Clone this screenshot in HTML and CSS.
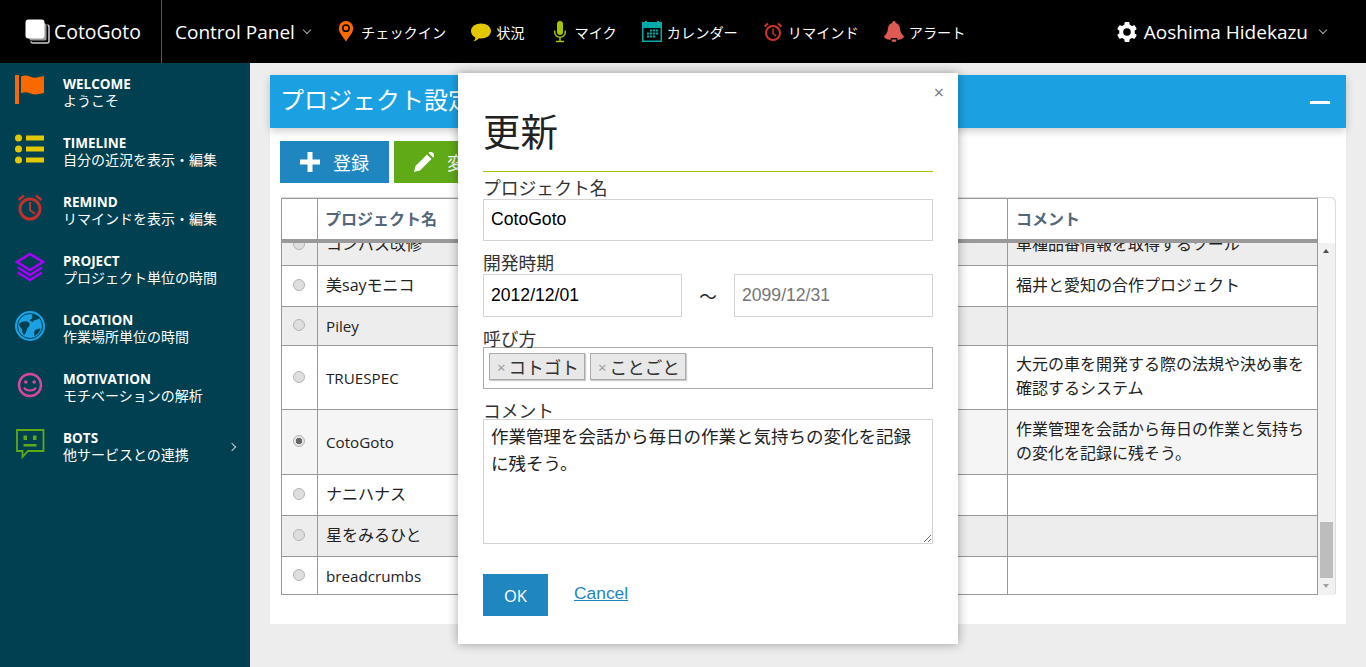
FILE: index.html
```html
<!DOCTYPE html>
<html lang="ja">
<head>
    <meta charset="UTF-8">
    <meta name="viewport" content="width=device-width, initial-scale=1.0">
    <title>CotoGoto</title>
    <link rel="stylesheet" href="styles.css">
</head>
<body>

    <header class="topbar">
        <div class="brand">
            <svg class="brand-icon" viewBox="0 0 25 25"><rect x="6" y="6" width="18" height="18" rx="2" fill="none" stroke="#ccc" stroke-width="1.5"/><rect x="4" y="4" width="18" height="18" rx="2" fill="#999" stroke="#000"/><rect x="0.5" y="0.5" width="19" height="19" rx="3" fill="#fff"/></svg>
            <span>CotoGoto</span>
        </div>
        <div class="menu-title">Control Panel <span class="chevron"></span></div>
        <nav class="topnav">
            <a class="nav-item">
                <svg viewBox="0 0 20 22"><path fill="#fa6800" fill-rule="evenodd" d="M10 0a7.2 7.2 0 0 0-7.2 7.2C2.800 12 7.500 16 10 20.500 12.500 16 17.200 12 17.200 7.200A7.200 7.200 0 0 0 10 0zm0 3.300a3.900 3.900 0 1 1 0 7.800 3.900 3.900 0 0 1 0-7.800zm0 1.500a2.400 2.400 0 1 0 0 4.800 2.400 2.400 0 0 0 0-4.800z"/></svg>
                チェックイン
            </a>
            <a class="nav-item">
                <svg viewBox="0 0 20 22"><path fill="#e3c800" d="M10 2.500c5.500 0 10 3 10 7.500s-4.500 7.500-10 7.500c-.8 0-1.500 0-2.200-.2C6.500 19 4.500 20 2.500 20.300c1-1 1.700-2.300 1.800-3.900C1.700 15 0 12.700 0 10c0-4.500 4.500-7.500 10-7.500z"/></svg>
                状況
            </a>
            <a class="nav-item">
                <svg viewBox="0 0 20 22"><rect x="7" y="0" width="6" height="14" rx="3" fill="#a4c400"/><path fill="none" stroke="#a4c400" stroke-width="1.500" d="M4.700 9.500v1.500a5.300 5.300 0 0 0 10.600 0V9.500M10 16.500V20M6 20.500h8"/></svg>
                マイク
            </a>
            <a class="nav-item">
                <svg viewBox="0 0 20 22"><path fill="#00aba9" fill-rule="evenodd" d="M0 1h3V0h2v1h10V0h2v1h3v20H0zM1.500 7v12.500h17V7z"/><path fill="#00aba9" d="M8 8.500h2.200v2H8zM11 8.500h2.200v2H11zM14 8.500h2.200v2H14zM5 11.500h2.200v2H5zM8 11.500h2.200v2H8zM11 11.500h2.200v2H11zM14 11.500h2.200v2H14zM5 14.500h2.200v2H5zM8 14.500h2.200v2H8zM11 14.500h2.200v2H11z"/></svg>
                カレンダー
            </a>
            <a class="nav-item">
                <svg viewBox="0 0 20 22"><circle cx="10" cy="12" r="7" fill="none" stroke="#ce352c" stroke-width="2"/><path fill="none" stroke="#ce352c" stroke-width="1.500" d="M10 7.500V12.500L13 15"/><path fill="none" stroke="#ce352c" stroke-width="2" d="M1.500 5.500 5 2.500M18.500 5.500 15 2.500"/></svg>
                リマインド
            </a>
            <a class="nav-item">
                <svg viewBox="0 0 20 22"><path fill="#e05a55" d="M10 0a1.500 1.500 0 0 1 1.500 1.700c3 .8 4.300 3.300 4.600 6.300.3 3.200 1.500 5.200 3.900 7.200 0 2-3.500 3.300-6.500 3.700l-.2-1.800H6.700l-.2 1.800C3.500 18.500 0 17.200 0 15.200c2.400-2 3.600-4 3.900-7.200.3-3 1.600-5.500 4.600-6.300A1.500 1.500 0 0 1 10 0z"/><path fill="#e05a55" d="M7.500 18.500h5a2.500 2.500 0 0 1-5 0z"/></svg>
                アラート
            </a>
        </nav>
        <div class="user">
            <svg viewBox="0 0 20 20"><g fill="#fff"><circle cx="10" cy="10" r="7.800"/><rect x="7.500" y="0" width="5" height="20" rx="1"/><rect x="7.500" y="0" width="5" height="20" rx="1" transform="rotate(60 10 10)"/><rect x="7.500" y="0" width="5" height="20" rx="1" transform="rotate(120 10 10)"/></g><circle cx="10" cy="10" r="3.800" fill="#000"/></svg>
            <span>Aoshima Hidekazu</span>
            <span class="chevron"></span>
        </div>
    </header>

    <div class="layout">
        <aside class="sidebar">
            <a class="side-item">
                <svg viewBox="0 0 30 30"><path fill="#fa6800" d="M0 0h4v29H0zM6 1.500c3-1.500 6-1.500 9 0s6 1.500 9 .5l5-1v17l-5 1c-3 .7-6 .5-9-.8s-6-1.200-9 0z"/></svg>
                <div class="side-text"><strong>WELCOME</strong><span>ようこそ</span></div>
            </a>
            <a class="side-item">
                <svg viewBox="0 0 30 30"><g fill="#e3c800"><circle cx="3.500" cy="4" r="3.500"/><circle cx="3.500" cy="15" r="3.500"/><circle cx="3.500" cy="26" r="3.500"/><path d="M11 1.500h18v5H11zM11 12.500h18v5H11zM11 23.500h18v5H11z"/></g></svg>
                <div class="side-text"><strong>TIMELINE</strong><span>自分の近況を表示・編集</span></div>
            </a>
            <a class="side-item">
                <svg viewBox="0 0 30 30"><circle cx="15" cy="16" r="10" fill="none" stroke="#c1302b" stroke-width="3"/><path fill="none" stroke="#c1302b" stroke-width="2" d="M15 9v8l5 4"/><path fill="none" stroke="#c1302b" stroke-width="2.500" d="M3.500 7 9 2.500M26.500 7 21 2.500"/></svg>
                <div class="side-text"><strong>REMIND</strong><span>リマインドを表示・編集</span></div>
            </a>
            <a class="side-item">
                <svg viewBox="0 0 30 30"><path fill="none" stroke="#aa00ff" stroke-width="2.500" d="M15 2 28 10 15 18 2 10z"/><path fill="none" stroke="#aa00ff" stroke-width="2.500" d="M3 15.500 15 23l12-7.500M3 20.500 15 28l12-7.500"/></svg>
                <div class="side-text"><strong>PROJECT</strong><span>プロジェクト単位の時間</span></div>
            </a>
            <a class="side-item">
                <svg viewBox="0 0 30 30"><circle cx="15" cy="15" r="15" fill="#1ba1e2"/><circle cx="15" cy="15" r="12.500" fill="#1ba1e2" stroke="#004050" stroke-width="1"/><path fill="#004050" d="M4 13c2-2 5-3 8-2.500 2 .5 3 2 2.500 4-.5 1.500-2 2-2.500 3.500-.5 2-1 4.500-3 6-2-2-1.500-4-2-5.500C6 16.500 4 15.500 4 13zM17 3.500c3 0 6 1 8 3l-2.500 2c-2 .5-4 .5-5 2.500l-3-1.500c1-1.500 3-1.500 3-3.500-.5-1-.5-1.500-.5-2.500zM20 19c2-1 4-1.500 5.500-1-1 3-3 5.500-6 7-.5-2-.5-4.500.5-6z"/></svg>
                <div class="side-text"><strong>LOCATION</strong><span>作業場所単位の時間</span></div>
            </a>
            <a class="side-item">
                <svg viewBox="0 0 30 30"><circle cx="15" cy="15" r="11" fill="none" stroke="#d8479f" stroke-width="2.500"/><circle cx="10.800" cy="12" r="1.800" fill="#d8479f"/><circle cx="19.200" cy="12" r="1.800" fill="#d8479f"/><path fill="none" stroke="#d8479f" stroke-width="2" d="M9 17.500c2 4 10 4 12 0"/></svg>
                <div class="side-text"><strong>MOTIVATION</strong><span>モチベーションの解析</span></div>
            </a>
            <a class="side-item">
                <svg viewBox="0 0 30 30"><path fill="none" stroke="#60a917" stroke-width="1.800" d="M2 1h26.500v21H13l-5.500 6v-6H2z"/><path fill="#60a917" d="M8.500 6.500h3.500v4.500H8.500zM18 6.500h3.500v4.500H18zM8.500 15h13v2.500h-13z"/></svg>
                <div class="side-text"><strong>BOTS</strong><span>他サービスとの連携</span></div>
                <span class="side-arrow"></span>
            </a>
        </aside>

        <main class="main">
            <section class="panel">
                <div class="panel-head">
                    <h1>プロジェクト設定</h1>
                    <span class="collapse"></span>
                </div>
                <div class="toolbar">
                    <button class="btn btn-blue" type="button">
                        <svg viewBox="0 0 20 20"><path fill="#fff" d="M7.500 0h5v7.500H20v5h-7.500V20h-5v-7.500H0v-5h7.500z"/></svg>
                        登録
                    </button>
                    <button class="btn btn-green" type="button">
                        <svg viewBox="0 0 20 20"><path fill="#fff" d="M0 20l1.500-6L13 2.500l4.500 4.500L6 18.500zM14.500 1l1-1a2 2 0 0 1 2.500 0l2 2a2 2 0 0 1 0 2.500l-1 1z"/></svg>
                        変更
                    </button>
                </div>
                <div class="grid-wrap">
                    <div class="grid-main">
                        <table class="grid grid-head">
                            <tr>
                                <th class="col-check"></th>
                                <th class="col-name">プロジェクト名</th>
                                <th class="col-note">コメント</th>
                            </tr>
                        </table>
                        <div class="grid-body">
                            <table class="grid grid-rows">
                                <tr class="row-gray">
                                    <td class="col-check"><input class="radio" type="radio" name="project"></td>
                                    <td class="col-name">コンパス改修</td>
                                    <td class="col-note">車種品番情報を取得するツール</td>
                                </tr>
                                <tr>
                                    <td class="col-check"><input class="radio" type="radio" name="project"></td>
                                    <td class="col-name">美sayモニコ</td>
                                    <td class="col-note">福井と愛知の合作プロジェクト</td>
                                </tr>
                                <tr class="row-gray row-short">
                                    <td class="col-check"><input class="radio" type="radio" name="project"></td>
                                    <td class="col-name"><span class="latin">Piley</span></td>
                                    <td class="col-note"></td>
                                </tr>
                                <tr class="row-tall">
                                    <td class="col-check"><input class="radio" type="radio" name="project"></td>
                                    <td class="col-name"><span class="latin">TRUESPEC</span></td>
                                    <td class="col-note">大元の車を開発する際の法規や決め事を確認するシステム</td>
                                </tr>
                                <tr class="row-active">
                                    <td class="col-check"><input class="radio" type="radio" name="project" checked></td>
                                    <td class="col-name"><span class="latin">CotoGoto</span></td>
                                    <td class="col-note">作業管理を会話から毎日の作業と気持ちの変化を記録に残そう。</td>
                                </tr>
                                <tr>
                                    <td class="col-check"><input class="radio" type="radio" name="project"></td>
                                    <td class="col-name">ナニハナス</td>
                                    <td class="col-note"></td>
                                </tr>
                                <tr class="row-gray">
                                    <td class="col-check"><input class="radio" type="radio" name="project"></td>
                                    <td class="col-name">星をみるひと</td>
                                    <td class="col-note"></td>
                                </tr>
                                <tr class="row-last">
                                    <td class="col-check"><input class="radio" type="radio" name="project"></td>
                                    <td class="col-name"><span class="latin">breadcrumbs</span></td>
                                    <td class="col-note"></td>
                                </tr>
                            </table>
                        </div>
                    </div>
                    <div class="scrollbar">
                        <span class="arrow-up"></span>
                        <span class="thumb"></span>
                        <span class="arrow-down"></span>
                    </div>
                </div>
            </section>
        </main>
    </div>

    <div class="modal">
        <span class="modal-close">×</span>
        <h2>更新</h2>
        <form>
            <div class="field">
                <label for="projectName">プロジェクト名</label>
                <input class="input" type="text" id="projectName" value="CotoGoto">
            </div>
            <div class="field field-date">
                <label for="startDate">開発時期</label>
                <div class="date-row">
                    <input class="input" type="text" id="startDate" value="2012/12/01">
                    <span class="tilde">～</span>
                    <input class="input" type="text" placeholder="2099/12/31">
                </div>
            </div>
            <div class="field field-low">
                <label>呼び方</label>
                <div class="tag-box">
                    <span class="tag"><i>×</i>コトゴト</span>
                    <span class="tag"><i>×</i>ことごと</span>
                </div>
            </div>
            <div class="field field-low">
                <label for="comment">コメント</label>
                <textarea class="input textarea" id="comment">作業管理を会話から毎日の作業と気持ちの変化を記録に残そう。</textarea>
            </div>
            <div class="actions">
                <button class="btn-ok" type="button">OK</button>
                <a class="cancel" href="#">Cancel</a>
            </div>
        </form>
    </div>

</body>
</html>
```

FILE: styles.css
```css
* {
    box-sizing: border-box;
}
html, body {
    height: 100%;
}
body {
    margin: 0;
    overflow: hidden;
    font-family: "Open Sans", "Noto Sans CJK JP", sans-serif;
    background-color: #ededed;
    color: #222;
}

/* top bar */
.topbar {
    display: flex;
    align-items: center;
    height: 63px;
    background: #000;
    color: #fff;
}
.brand {
    display: flex;
    align-items: center;
    gap: 4px;
    width: 162px;
    height: 100%;
    padding-left: 25px;
    border-right: 1px solid #555;
    font-size: 19.400px;
}
.brand-icon {
    width: 25px;
    height: 25px;
}
.menu-title {
    display: flex;
    align-items: center;
    padding-left: 13px;
    width: 174px;
    font-size: 19px;
    white-space: pre;
}
.chevron {
    display: inline-block;
    width: 6px;
    height: 6px;
    margin-left: 4px;
    margin-top: -3px;
    border-right: 1px solid #aaa;
    border-bottom: 1px solid #aaa;
    transform: rotate(45deg);
}
.topnav {
    display: flex;
    gap: 25px;
}
.nav-item {
    display: flex;
    align-items: center;
    gap: 5px;
    font-size: 14.200px;
    color: #fff;
}
.nav-item svg {
    width: 20px;
    height: 22px;
}
.user {
    display: flex;
    align-items: center;
    gap: 7px;
    margin-left: auto;
    padding-right: 40px;
    font-size: 19px;
}
.user svg {
    width: 20px;
    height: 20px;
}
.user .chevron {
    margin-left: 5px;
}

/* sidebar */
.layout {
    display: flex;
    height: 604px;
}
.sidebar {
    width: 250px;
    background: #004050;
    color: #fff;
}
.side-item {
    display: flex;
    align-items: center;
    gap: 18px;
    height: 59px;
    padding-left: 15px;
}
.side-item svg {
    width: 30px;
    height: 30px;
    margin-top: -6px;
}
.side-text {
    display: flex;
    flex-direction: column;
    padding-bottom: 1px;
    font-size: 14px;
    line-height: 17px;
}
.side-text strong {
    margin-bottom: -1px;
    font-size: 13.500px;
}
.side-arrow {
    width: 6px;
    height: 6px;
    margin-left: auto;
    margin-right: 15px;
    border-top: 1px solid #ccc;
    border-right: 1px solid #ccc;
    transform: rotate(45deg);
}

/* panel */
.main {
    flex: 1;
    padding: 12px 20px 0;
}
.panel {
    height: 549px;
    background: #fff;
}
.panel-head {
    display: flex;
    align-items: center;
    justify-content: space-between;
    height: 53px;
    padding: 0 16px 0 12px;
    background: #1ba1e2;
    color: #fff;
    box-shadow: 0 3px 8px rgba(0, 0, 0, 0.2);
}
.panel-head h1 {
    margin: -6px 0 0 -2px;
    font-size: 24px;
    font-weight: 400;
}
.collapse {
    width: 20px;
    height: 3px;
    margin-top: 2px;
    background: #fff;
}
.toolbar {
    display: flex;
    gap: 5px;
    padding: 13px 10px 0;
}
.btn {
    display: flex;
    align-items: center;
    gap: 13px;
    width: 109px;
    height: 42px;
    padding: 0 20px;
    border: none;
    color: #fff;
    font-family: inherit;
    font-size: 18px;
}
.btn svg {
    width: 20px;
    height: 20px;
}
.btn-blue {
    background: #2086bf;
}
.btn-green {
    background: #60a917;
}

/* table */
.grid-wrap {
    display: flex;
    width: 1054px;
    margin: 15px 0 0 11px;
    border-radius: 0 5px 0 0;
    box-shadow: 1px -1px 0 #ddd;
}
.grid-main {
    width: 1037px;
}
.grid {
    width: 1037px;
    table-layout: fixed;
    border-collapse: separate;
    border-spacing: 0;
    font-size: 16px;
}
.grid th, .grid td {
    padding: 0 8px 2px;
    border-left: 1px solid #999;
    border-bottom: 1px solid #999;
    text-align: left;
    line-height: 24px;
}
.grid .col-check {
    width: 36px;
    padding: 0 2px 2px 0;
    text-align: center;
}
.grid .col-name {
    width: 690px;
}
.grid .col-note {
    width: 311px;
    padding-bottom: 3px;
    border-right: 1px solid #999;
}
.latin {
    display: inline-block;
    padding-top: 2px;
    font-size: 15.200px;
}
.grid th {
    height: 45px;
    border-top: 1px solid #999;
    border-bottom: 4px solid #999;
    color: #54667a;
    font-weight: 700;
}
.grid th.col-name, .grid th.col-note {
    padding-bottom: 0;
}
.grid th.col-name {
    padding-left: 7px;
}
.grid-body {
    height: 352px;
    overflow: hidden;
}
.grid-rows {
    margin-top: -18px;
}
.grid td {
    height: 41px;
}
.row-gray td {
    background: #ededed;
}
.row-short td {
    height: 39px;
}
.row-tall td {
    height: 64px;
}
.row-active td {
    height: 65px;
    background: #f5f5f5;
}
.row-last td {
    height: 38px;
}
.radio {
    appearance: none;
    display: block;
    width: 12px;
    height: 12px;
    margin: 0 auto;
    border: 1px solid #b4b4b4;
    border-radius: 50%;
    background: #dedede;
}
.radio:checked {
    background: radial-gradient(circle, #666 0 3px, #e4e4e4 3.500px);
}
.scrollbar {
    position: relative;
    width: 17px;
    height: 352px;
    margin-top: 45px;
    background: #f1f1f1;
}
.thumb {
    position: absolute;
    top: 279px;
    left: 2px;
    width: 13px;
    height: 56px;
    background: #bdbdbd;
}
.arrow-up, .arrow-down {
    position: absolute;
    left: 5px;
    width: 0;
    height: 0;
    border-left: 3.500px solid transparent;
    border-right: 3.500px solid transparent;
}
.arrow-up {
    top: 6px;
    border-bottom: 4px solid #505050;
}
.arrow-down {
    top: 341px;
    border-top: 4px solid #a0a0a0;
}

/* dialog */
.modal {
    position: absolute;
    top: 73px;
    left: 458px;
    width: 500px;
    height: 571px;
    padding: 0 25px;
    background: #fff;
    box-shadow: 0 0 10px rgba(0, 0, 0, 0.35);
}
.modal-close {
    position: absolute;
    top: 7px;
    right: 14px;
    color: #777;
    font-size: 18px;
}
.modal h2 {
    height: 99px;
    margin: 0;
    padding-top: 34px;
    border-bottom: 1px solid #a4c400;
    font-size: 37.500px;
    font-weight: 400;
    line-height: 50px;
}
.field {
    margin-top: 3px;
}
.field:first-child {
    margin-top: 0;
}
.field-date {
    margin-top: 6px;
}
.field label {
    display: block;
    height: 27px;
    font-size: 17.800px;
    line-height: 33px;
    color: #333;
}
.field-low label {
    line-height: 38px;
}
.input {
    display: block;
    width: 100%;
    height: 42px;
    padding: 0 7px 2px;
    border: 1px solid #d4d4d4;
    border-radius: 0;
    outline: none;
    color: #000;
    font-family: "Liberation Sans", "Noto Sans CJK JP", sans-serif;
    font-size: 17.600px;
}
.date-row {
    display: flex;
    align-items: center;
}
.date-row .input {
    width: 199px;
    height: 43px;
    padding-bottom: 0;
}
.tilde {
    width: 52px;
    text-align: center;
    font-size: 17.600px;
}
.tag-box {
    display: flex;
    gap: 5px;
    height: 42px;
    padding: 5px;
    border: 1px solid #aaa;
}
.tag {
    display: flex;
    align-items: center;
    height: 27px;
    padding: 0 5px 0 7px;
    border: 1px solid #aaa;
    background: #e8e8e8;
    box-shadow: 1px 1px 1px rgba(0, 0, 0, 0.2);
    font-size: 17.600px;
    color: #333;
}
.tag i {
    margin-right: 3px;
    color: #999;
    font-size: 15px;
    font-style: normal;
}
.textarea {
    height: 125px;
    padding: 4px 7px;
    font-size: 17.500px;
    line-height: 27px;
    color: #222;
}
.actions {
    display: flex;
    align-items: center;
    gap: 26px;
    margin-top: 30px;
}
.btn-ok {
    width: 65px;
    height: 42px;
    border: none;
    background: #2086bf;
    color: #fff;
    font-family: inherit;
    font-size: 16.500px;
}
.cancel {
    margin-top: -4px;
    color: #1f85c0;
    font-family: "Liberation Sans", sans-serif;
    font-size: 17.400px;
}
```
